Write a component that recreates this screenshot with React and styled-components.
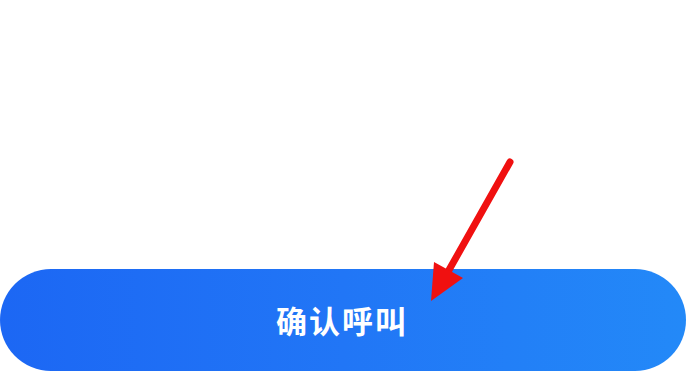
import React from "react";
import styled, { createGlobalStyle } from "styled-components";

const Global = createGlobalStyle`
  html, body { margin: 0; padding: 0; background: #ffffff; }
  body { font-family: "Noto Sans CJK SC", "Noto Sans", sans-serif; }
`;

const Page = styled.div`
  position: relative;
  width: 692px;
  height: 381px;
  overflow: hidden;
  background: #ffffff;
  display: flex;
  flex-direction: column;
  justify-content: flex-end;
  padding: 0 6px 10px 0;
  box-sizing: border-box;
`;

const ConfirmButton = styled.button`
  width: 100%;
  height: 102px;
  border: none;
  border-radius: 51px;
  background: linear-gradient(90deg, #1c67f4 0%, #2176f6 50%, #2389f8 100%);
  color: #ffffff;
  font-family: "Noto Sans CJK SC", sans-serif;
  font-weight: 700;
  font-size: 31px;
  letter-spacing: 2px;
  display: flex;
  align-items: center;
  justify-content: center;
  padding: 0 2px 2px 0;
  cursor: pointer;
`;

const ArrowOverlay = styled.svg`
  position: absolute;
  left: 0;
  top: 0;
  pointer-events: none;
`;

export default function App() {
  return (
    <>
      <Global />
      <Page>
        <ConfirmButton>确认呼叫</ConfirmButton>
        <ArrowOverlay width="692" height="381" viewBox="0 0 692 381">
          <line x1="510" y1="162" x2="449" y2="270" stroke="#f01010" strokeWidth="7" strokeLinecap="round" />
          <polygon points="431,301 434,262 463,278" fill="#f01010" />
        </ArrowOverlay>
      </Page>
    </>
  );
}
